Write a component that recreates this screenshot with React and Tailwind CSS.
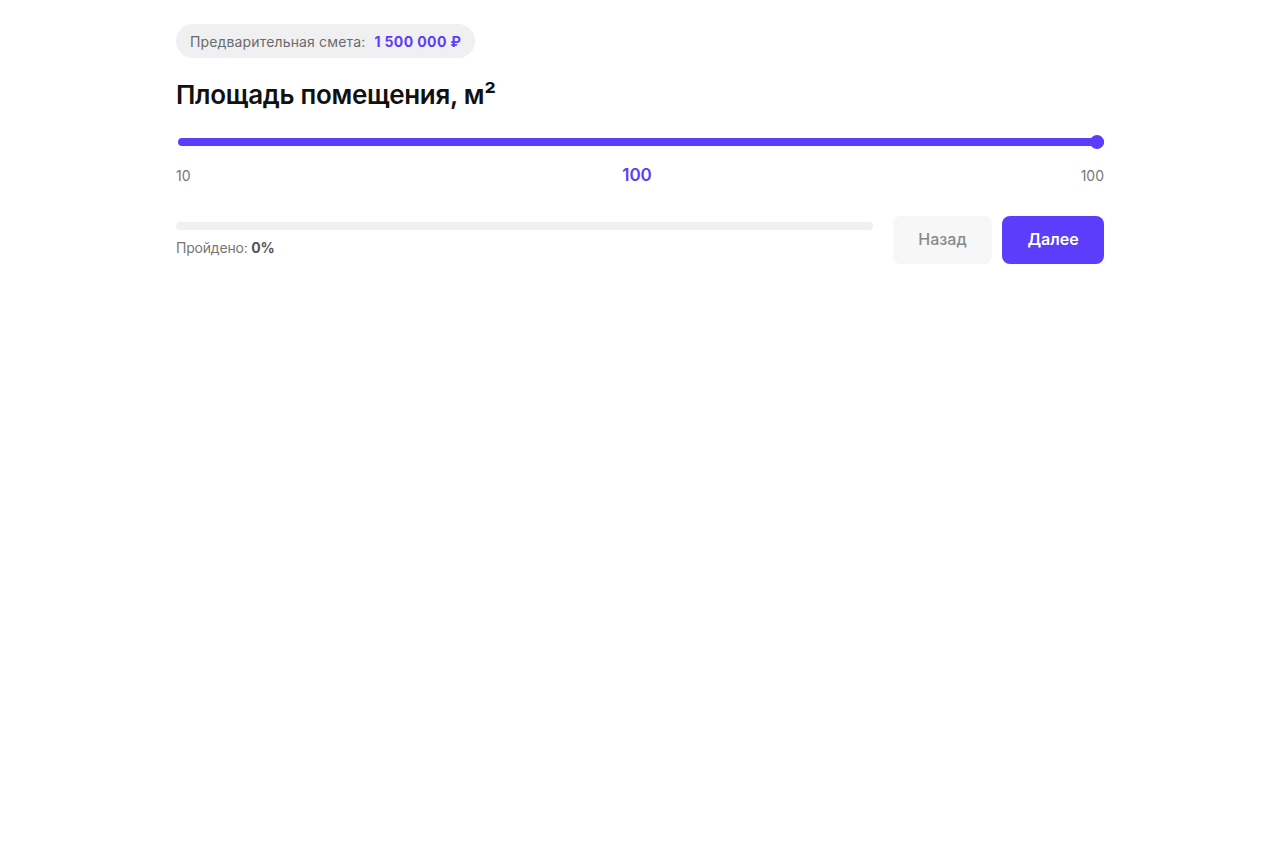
export default function App() {
  const font = { fontFamily: 'Inter, "Noto Sans", sans-serif' };
  return (
    <div className="min-h-[860px] bg-white" style={font}>
      <div className="mx-auto w-[928px] pt-6">
        <div className="inline-flex h-[34px] items-center gap-[9px] rounded-full bg-[#f0f0f2] px-[14px]">
          <span className="text-[14px] text-[#6b6b6b] tracking-[0.15px]">Предварительная смета:</span>
          <span className="text-[14px] font-bold text-[#5c3dfb] tracking-[0.4px]">1 500 000 ₽</span>
        </div>
        <h1 className="mt-[21px] text-[26px] font-semibold leading-[32px] tracking-[-0.3px] text-[#111]">
          Площадь помещения, м²
        </h1>
        <div className="relative mt-[24px] h-[14px]">
          <div className="absolute left-[2px] right-0 top-[3px] h-[8px] rounded-full bg-[#5c3dfb]" />
          <div className="absolute right-0 top-0 h-[14px] w-[14px] rounded-full bg-[#5c3dfb]" />
        </div>
        <div className="mt-[14px] flex items-center justify-between">
          <span className="w-[60px] text-[14px] text-[#777]">10</span>
          <span className="text-[17px] font-semibold text-[#5c3dfb] -translate-x-[3px]">100</span>
          <span className="w-[60px] text-right text-[14px] text-[#777]">100</span>
        </div>
        <div className="mt-[27px] flex items-start gap-5">
          <div className="flex-1 pt-[6px]">
            <div className="h-[8px] w-full rounded-full bg-[#f0f0f2]" />
            <div className="mt-[7px] text-[14px] text-[#777] tracking-[-0.2px]">
              Пройдено: <span className="font-bold text-[#555]">0%</span>
            </div>
          </div>
          <div className="flex gap-[10px]">
            <button className="h-[48px] w-[99px] rounded-lg bg-[#f7f7f7] pb-[2px] text-[16px] font-medium text-[#8a8a8a]">
              Назад
            </button>
            <button className="h-[48px] w-[102px] rounded-lg bg-[#5c3dfb] pb-[2px] text-[16px] font-semibold text-white">
              Далее
            </button>
          </div>
        </div>
      </div>
    </div>
  );
}
